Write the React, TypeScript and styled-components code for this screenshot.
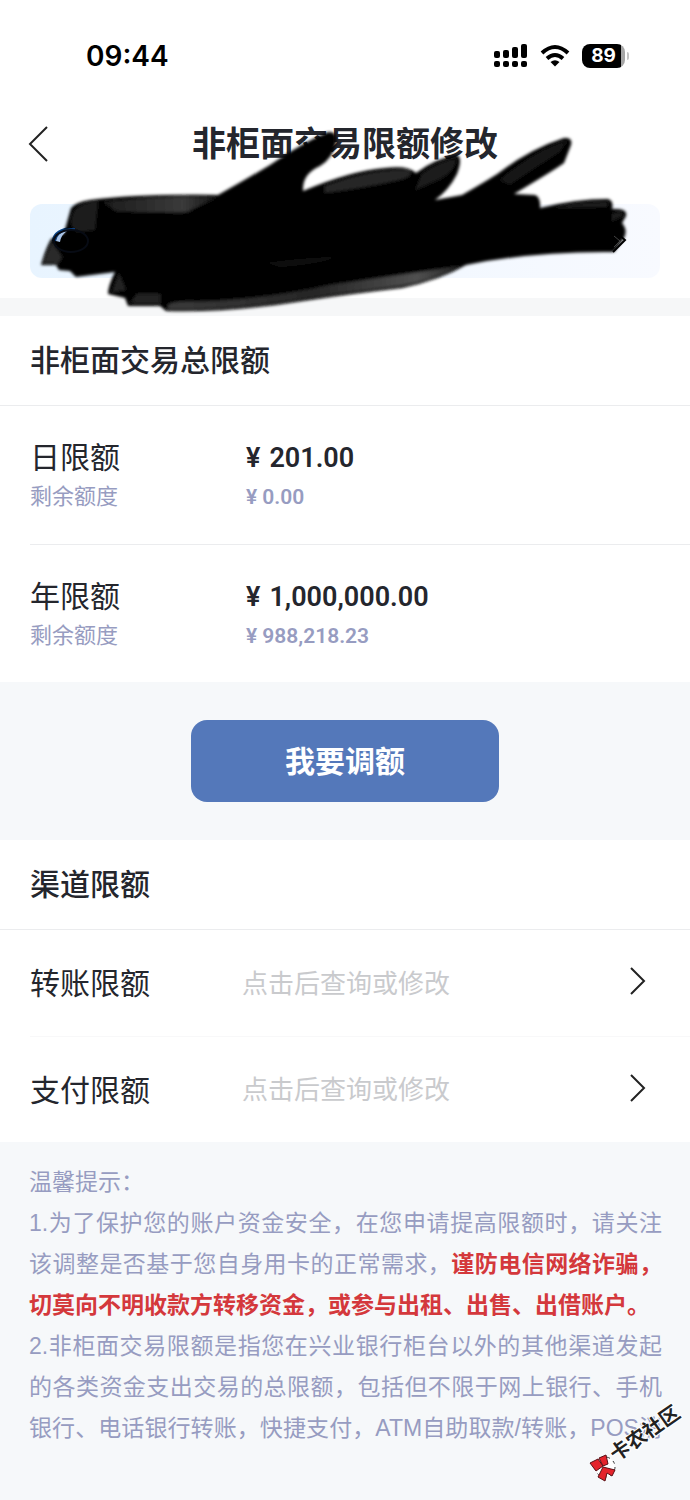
import React from 'react';
import styled, { createGlobalStyle } from 'styled-components';

const GlobalStyle = createGlobalStyle`
  * {
    box-sizing: border-box;
  }

  body {
    margin: 0;
    background: #f6f8fa;
    color: #24262d;
    font-family: 'Liberation Sans', 'Noto Sans CJK SC', sans-serif;
  }

  h1, h2, p {
    margin: 0;
  }
`;

const Page = styled.div`
  position: relative;
  display: flex;
  flex-direction: column;
  min-height: 100vh;
  overflow: hidden;
  background: #f6f8fa;
`;

const StatusBar = styled.div`
  display: flex;
  align-items: center;
  justify-content: space-between;
  height: 112px;
  padding: 0 61px 0 86px;
  background: #fff;
`;

const Time = styled.span`
  font-family: Inter, sans-serif;
  font-size: 28px;
  font-weight: 600;
  color: #000;
`;

const StatusIcons = styled.div`
  display: flex;
  align-items: center;
  gap: 12px;
`;

const Battery = styled.div`
  display: flex;
  align-items: center;
  gap: 2px;
`;

const BatteryBody = styled.span`
  width: 43px;
  height: 24px;
  border-radius: 8px;
  background: linear-gradient(90deg, #000 90%, #a6a6a6 90%);
  color: #fff;
  font-family: Inter, sans-serif;
  font-size: 19px;
  font-weight: 700;
  line-height: 24px;
  text-align: center;
`;

const BatteryTip = styled.span`
  width: 2px;
  height: 8px;
  border-radius: 0 2px 2px 0;
  background: #c4c4c4;
`;

const NavBar = styled.header`
  display: grid;
  grid-template-columns: 48px 1fr 48px;
  align-items: center;
  height: 64px;
  padding: 0 14px;
  background: #fff;
`;

const BackButton = styled.button`
  display: flex;
  justify-content: center;
  padding: 0;
  border: 0;
  background: none;
`;

const Title = styled.h1`
  font-size: 34px;
  font-weight: 700;
  line-height: 48px;
  text-align: center;
`;

const CardArea = styled.div`
  padding: 28px 30px 20px;
  background: #fff;
`;

const CardPicker = styled.button`
  display: flex;
  align-items: center;
  justify-content: space-between;
  width: 100%;
  height: 74px;
  padding: 0 34px 0 22px;
  border: 0;
  border-radius: 12px;
  background: linear-gradient(90deg, #e8f4ff, #f8faff);
`;

const Scribble = styled.svg`
  position: absolute;
  top: 120px;
  left: 30px;
  pointer-events: none;
`;

const Band = styled.div`
  height: 18px;
  background: #f6f7f8;
`;

const Section = styled.section`
  background: #fff;
`;

const SectionTitle = styled.h2`
  height: 90px;
  padding-left: 30px;
  border-bottom: 1px solid #ebecee;
  font-size: 30px;
  font-weight: 500;
  line-height: 90px;
`;

const LimitRow = styled.div`
  display: grid;
  grid-template-columns: 216px 1fr;
  align-content: center;
  height: 138px;
  margin-left: 30px;
  padding-top: 2px;

  & + & {
    border-top: 1px solid #ebecee;
  }
`;

const LimitName = styled.span`
  font-size: 30px;
  line-height: 42px;
`;

const LimitValue = styled.span`
  display: flex;
  gap: 9px;
  font-family: Roboto, sans-serif;
  font-size: 27px;
  font-weight: 600;
  line-height: 42px;
`;

const RemainName = styled.span`
  color: #979cc1;
  font-size: 22px;
  line-height: 36px;
`;

const RemainValue = styled(LimitValue)`
  gap: 5px;
  color: #979cc1;
  font-size: 21px;
  line-height: 36px;
`;

const ActionArea = styled.div`
  display: flex;
  justify-content: center;
  padding: 38px 0;
`;

const PrimaryButton = styled.button`
  width: 308px;
  height: 82px;
  padding: 0 0 4px;
  border: 0;
  border-radius: 16px;
  background: #5478ba;
  color: #fff;
  font: inherit;
  font-size: 30px;
  font-weight: 700;
`;

const ChannelRow = styled.a`
  display: grid;
  grid-template-columns: 212px 1fr auto;
  align-items: center;
  height: 106px;
  margin-left: 30px;
  padding: 0 43px 4px 0;
  color: inherit;
  font-size: 30px;
  text-decoration: none;

  & + & {
    border-top: 1px solid #f8f8f9;
  }
`;

const Hint = styled.span`
  color: #c9cacd;
  font-size: 26px;
`;

const Tips = styled.section`
  padding: 20px 28px 20px 29px;
  color: #979cc1;
  font-size: 23px;
  line-height: 41px;
`;

const Tip = styled.p<{ $fill?: boolean }>`
  text-align: justify;
  text-align-last: ${({ $fill }) => ($fill ? 'justify' : 'auto')};
`;

const Warning = styled.strong`
  color: #d4383c;
`;

const Watermark = styled.svg`
  position: absolute;
  right: 5px;
  bottom: 15px;
  pointer-events: none;
`;

const Chevron = () => (
  <svg width="18" height="30" viewBox="0 0 18 30" fill="none" stroke="#222" strokeWidth="2">
    <path d="M2 2 L15 15 L2 28" />
  </svg>
);

const limits = [
  { name: '日限额', value: '201.00', remain: '0.00' },
  { name: '年限额', value: '1,000,000.00', remain: '988,218.23' },
];

const channels = ['转账限额', '支付限额'];

const signalBars = [
  { x: 0, y: 7, h: 7 },
  { x: 9, y: 6, h: 8 },
  { x: 18, y: 3, h: 11 },
  { x: 27, y: 0, h: 14 },
];

const App = () => {
  return (
    <Page>
      <GlobalStyle />
      <StatusBar>
        <Time>09:44</Time>
        <StatusIcons>
          <svg width="34" height="24" viewBox="0 0 34 24">
            {signalBars.map((bar) => (
              <g key={bar.x}>
                <rect x={bar.x} y={bar.y} width="6" height={bar.h} rx="2" />
                <rect x={bar.x} y="17" width="6" height="6" rx="2" />
              </g>
            ))}
          </svg>
          <svg width="30" height="24" viewBox="0 0 30 24" fill="none" stroke="#000" strokeWidth="4">
            <path d="M2 9 Q15 -3 28 9" />
            <path d="M7 14.500 Q15 7.500 23 14.500" />
            <path d="M15 22.500 L10.500 18 Q15 14.500 19.500 18 Z" fill="#000" stroke="none" />
          </svg>
          <Battery>
            <BatteryBody>89</BatteryBody>
            <BatteryTip />
          </Battery>
        </StatusIcons>
      </StatusBar>

      <NavBar>
        <BackButton aria-label="返回">
          <svg width="20" height="36" viewBox="0 0 20 36" fill="none" stroke="#222" strokeWidth="2">
            <path d="M19 1 L2 18 L19 35" />
          </svg>
        </BackButton>
        <Title>非柜面交易限额修改</Title>
      </NavBar>

      <CardArea>
        <CardPicker aria-label="选择账户">
          <svg width="40" height="30" viewBox="0 0 40 30">
            <ellipse cx="20" cy="15" rx="18" ry="12" fill="#fff" stroke="#0a4386" strokeWidth="4" />
          </svg>
        </CardPicker>
      </CardArea>

      <Scribble width="610" height="200" viewBox="30 120 610 200">
        <defs>
          <filter id="soft" x="-5%" y="-10%" width="110%" height="120%">
            <feGaussianBlur stdDeviation="1.6" />
          </filter>
          <linearGradient id="leftFade" x1="0" x2="1">
            <stop offset="0" stopColor="#1c1c1c" />
            <stop offset="0.700" stopColor="#3a3a3a" />
            <stop offset="1" stopColor="#151515" />
          </linearGradient>
          <linearGradient id="bottomFade" x1="0" x2="1">
            <stop offset="0" stopColor="#3a3a3a" />
            <stop offset="0.500" stopColor="#262626" />
            <stop offset="0.850" stopColor="#505050" />
            <stop offset="1" stopColor="#222" />
          </linearGradient>
        </defs>
        <g filter="url(#soft)">
          <path
            fill="#020202"
            d="M71 208 Q76 202 90 200 Q135 194 218 195 Q245 180 270 165 Q300 144 328 132 Q338 131 336 143 Q333 158 320 166 Q302 174 303 191 Q350 171 385 168 Q408 165 416 173 Q436 158 457 155 Q463 158 457 174 Q449 190 435 200 L462 195 Q490 179 500 172 Q530 149 564 138 Q573 137 571 145 L564 163 Q556 169 514 194 L535 195 Q541 197 540 208 Q575 199 608 199 Q614 201 612 209 Q628 208 626 216 L622 223 Q628 230 624 238 L614 252 Q535 251 466 265 Q440 280 402 288 Q350 294 310 300 Q230 313 166 311 L160 306 L128 306 L125 298 L108 294 Q108 286 115 272 L76 277 L70 271 L59 270 L56 265 L41 265 Q45 250 51 239 L64 233 Z"
          />
          <path fill="#1b1b1b" d="M75 210 Q80 203 98 201 L95 230 L78 232 Q66 225 75 210 Z" />
          <path fill="url(#leftFade)" d="M103 202 Q155 196 217 197 L187 212 Q150 213 116 211 Z" />
          <path fill="#262626" d="M325 186 Q370 169 406 170 Q417 173 403 179 Q370 187 325 193 Z" />
          <path fill="#1d1d1d" d="M422 174 Q440 160 456 159 Q456 170 440 179 L415 190 Z" />
          <path
            fill="url(#bottomFade)"
            d="M168 309 Q166 303 178 302 Q255 302 330 285 Q400 275 461 266 Q432 281 398 286 Q350 292 310 298 Q230 311 168 309 Z"
          />
          <path fill="#2c2c2c" d="M43 263 L52 242 L62 257 L58 264 Z" />
          <path fill="#202020" d="M112 292 L119 273 L126 290 Z M130 303 L137 294 L160 294 L160 304 Z" />
          <path fill="#181818" d="M500 180 Q535 151 567 141 L560 151 L510 184 Z" />
          <path fill="#1c1c1c" d="M552 208 Q583 201 608 202 L607 207 Z M612 214 Q622 209 623 216 L612 221 Z" />
          <path fill="#111" d="M268 263 Q290 259 334 257 Q325 263 280 267 Z" />
        </g>
        <path d="M55 241 Q60 228 75 229" fill="none" stroke="#0d3c77" strokeWidth="2" />
        <path d="M56 241 Q58 232 67 231 Q61 235 60 242 Z" fill="#a9c4e8" />
        <ellipse cx="71" cy="241" rx="17" ry="11" fill="none" stroke="#070b14" strokeWidth="2" />
        <path d="M612 229 L625 240 L613 252" fill="none" stroke="#000" strokeWidth="2" />
        <path d="M614 236 L620 241 L614 247" fill="none" stroke="#444" strokeWidth="1" />
      </Scribble>

      <Band />

      <Section>
        <SectionTitle>非柜面交易总限额</SectionTitle>
        {limits.map((limit) => (
          <LimitRow key={limit.name}>
            <LimitName>{limit.name}</LimitName>
            <LimitValue>
              <span>¥</span>
              <span>{limit.value}</span>
            </LimitValue>
            <RemainName>剩余额度</RemainName>
            <RemainValue>
              <span>¥</span>
              <span>{limit.remain}</span>
            </RemainValue>
          </LimitRow>
        ))}
      </Section>

      <ActionArea>
        <PrimaryButton>我要调额</PrimaryButton>
      </ActionArea>

      <Section>
        <SectionTitle>渠道限额</SectionTitle>
        {channels.map((channel) => (
          <ChannelRow key={channel} href="#">
            <span>{channel}</span>
            <Hint>点击后查询或修改</Hint>
            <Chevron />
          </ChannelRow>
        ))}
      </Section>

      <Tips>
        <Tip>温馨提示：</Tip>
        <Tip>
          1.为了保护您的账户资金安全，在您申请提高限额时，请关注该调整是否基于您自身用卡的正常需求，
          <Warning>谨防电信网络诈骗，切莫向不明收款方转移资金，或参与出租、出售、出借账户。</Warning>
        </Tip>
        <Tip $fill>
          2.非柜面交易限额是指您在兴业银行柜台以外的其他渠道发起的各类资金支出交易的总限额，包括但不限于网上银行、手机银行、电话银行转账，快捷支付，ATM自助取款/转账，POS消
        </Tip>
      </Tips>

      <Watermark width="100" height="85" viewBox="0 0 100 85">
        <circle cx="20" cy="67" r="10" fill="#fff" stroke="#333" strokeDasharray="3 4" />
        <g fill="#e4232b" stroke="#5a1015" strokeWidth="1">
          <path d="M5 63 L13 59 L18 66 L11 71 Z" />
          <path d="M14 58 L21 55 L23 64 L18 66 Z" />
          <path d="M18 67 L30 70 L27 76 L22 73 L20 81 L13 77 Z" />
        </g>
        <text
          transform="translate(31 62) rotate(-35)"
          fontSize="20"
          fontWeight="700"
          fill="#222"
          stroke="#fff"
          strokeWidth="2"
          paintOrder="stroke"
        >
          卡农社区
        </text>
      </Watermark>
    </Page>
  );
};

export default App;
